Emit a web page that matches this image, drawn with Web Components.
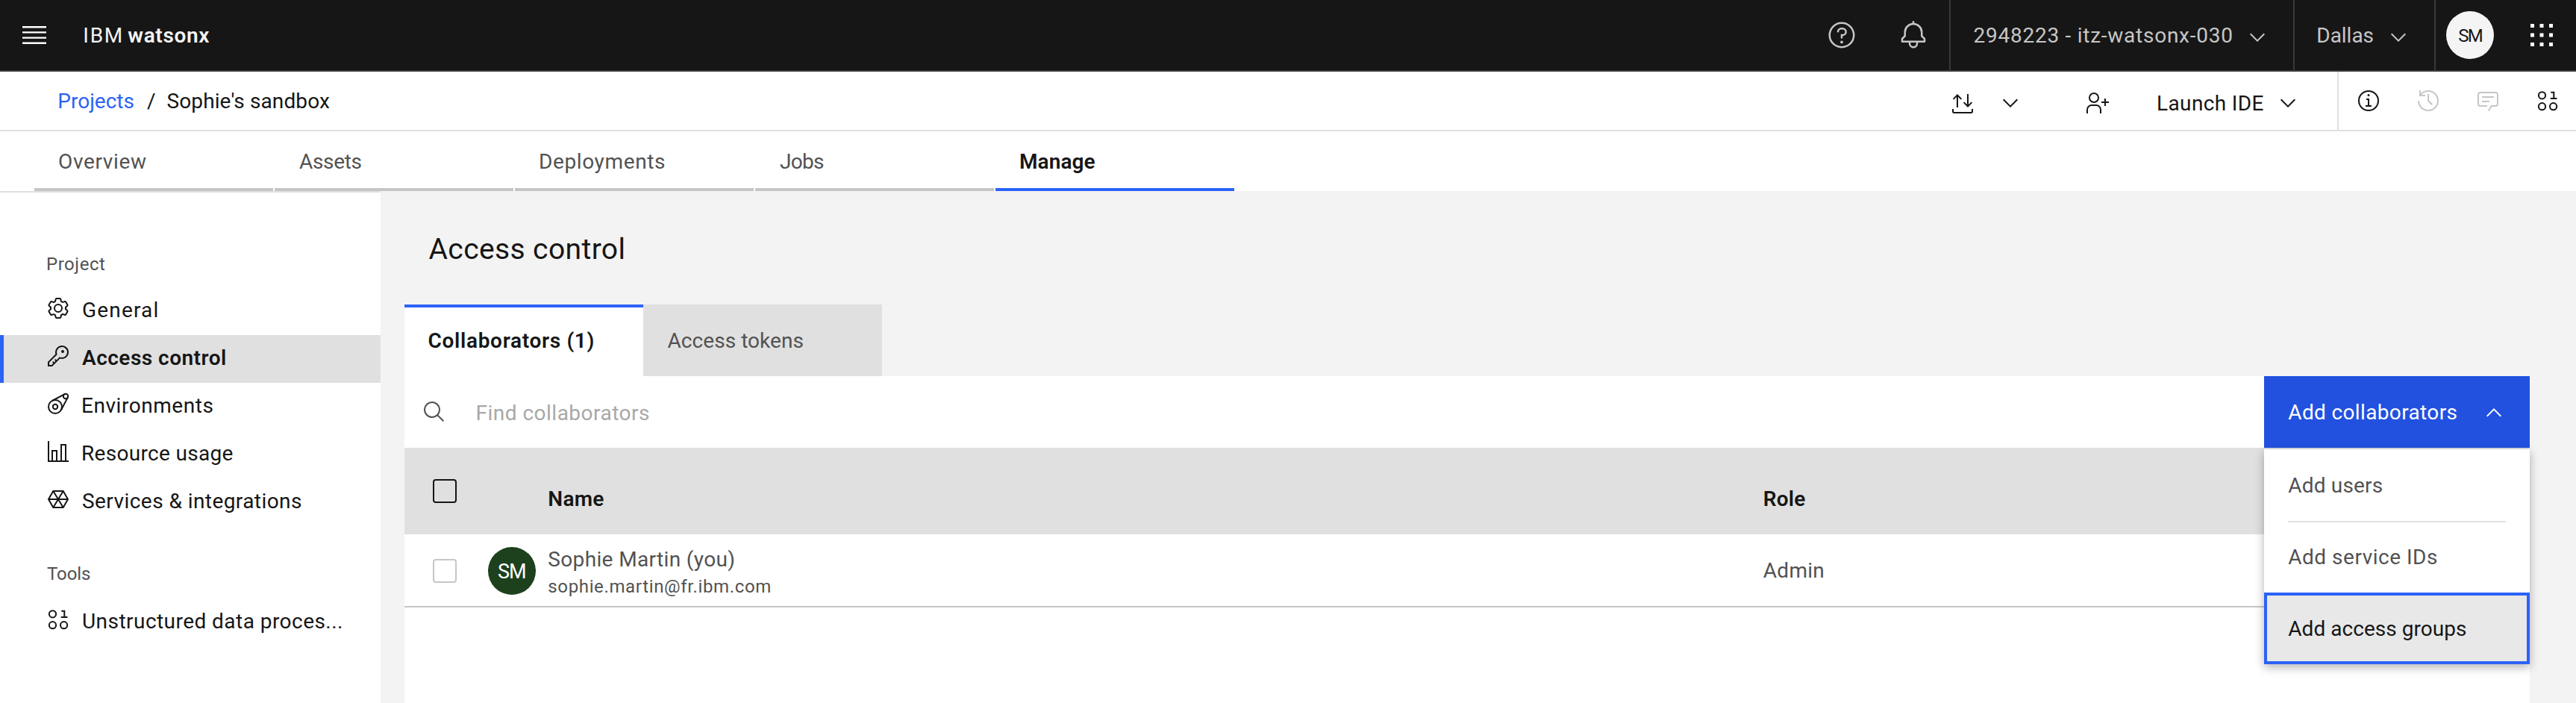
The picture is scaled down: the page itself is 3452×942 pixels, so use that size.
<!DOCTYPE html>
<html lang="en">
<head>
<meta charset="utf-8">
<title>IBM watsonx</title>
<style>
html,body{margin:0;height:100%;overflow:hidden;background:#f3f3f3}
body{font-family:Roboto,"Open Sans",sans-serif;color:#161616}
</style>
</head>
<body>
<wx-app></wx-app>
<script>
const define = (name, html, ready) => {
  const t = document.createElement('template');
  t.innerHTML = html;
  customElements.define(name, class extends HTMLElement {
    constructor() {
      super();
      this.attachShadow({mode: 'open'}).append(t.content.cloneNode(true));
    }
    connectedCallback() { if (ready) ready(this, this.shadowRoot); }
  });
};

// Text label: tracks its letters so that the word fills the width given in `w`.
const ctx = document.createElement('canvas').getContext('2d');
define('wx-label', `<style>
  :host{display:block;flex:none;white-space:pre;line-height:36px;padding-top:2px}
</style><slot></slot>`, el => {
  const size = +(el.getAttribute('size') || 28), weight = el.getAttribute('weight') || 400;
  const text = el.textContent, w = +el.getAttribute('w');
  ctx.font = `${weight} ${size}px Roboto, "Open Sans", sans-serif`;
  const m = ctx.measureText(text);
  const ink = m.actualBoundingBoxLeft + m.actualBoundingBoxRight;
  el.style.fontSize = size + 'px';
  el.style.fontWeight = weight;
  el.style.width = w + 'px';
  el.style.textIndent = m.actualBoundingBoxLeft + 'px';
  if (text.length > 1) el.style.letterSpacing = ((w - ink) / (text.length - 1)).toFixed(3) + 'px';
});

const icons = {
  menu: '<path d="M3.2 6.4h25.6v1.92H3.2zM3.2 12.16h25.6v1.92H3.2zM3.2 17.92h25.6v1.92H3.2zM3.2 23.68h25.6v1.92H3.2z"/>',
  help: '<circle cx="16" cy="16" r="13" class="s"/><path d="M17 8h-1.5A4.5 4.5 0 0 0 11 12.5V13h2v-.5a2.5 2.5 0 0 1 2.5-2.5H17a2.5 2.5 0 0 1 0 5h-2v4.5h2V17a4.5 4.5 0 0 0 0-9z"/><circle cx="16" cy="23.5" r="1.5"/>',
  bell: '<path d="M28.707 19.293 26 16.586V13a10.014 10.014 0 0 0-9-9.949V1h-2v2.051A10.014 10.014 0 0 0 6 13v3.586l-2.707 2.707A1 1 0 0 0 3 20v3a1 1 0 0 0 1 1h7v.777a5.152 5.152 0 0 0 4.5 5.199A5.006 5.006 0 0 0 21 25v-1h7a1 1 0 0 0 1-1v-3a1 1 0 0 0-.293-.707zM19 25a3 3 0 0 1-6 0v-1h6zm8-3H5v-1.586l2.707-2.707A1 1 0 0 0 8 17v-4a8 8 0 0 1 16 0v4a1 1 0 0 0 .293.707L27 20.414z"/>',
  down: '<path d="M16 22 6 12l1.4-1.4 8.6 8.6 8.6-8.6L26 12z"/>',
  up: '<path d="M16 10l10 10-1.4 1.4-8.6-8.6-8.6 8.6L6 20z"/>',
  apps: '<path d="M4 4h4v4H4zM14 4h4v4h-4zM24 4h4v4h-4zM4 14h4v4H4zM14 14h4v4h-4zM24 14h4v4h-4zM4 24h4v4H4zM14 24h4v4h-4zM24 24h4v4h-4z"/>',
  transfer: '<path class="s" d="M9 3.5V20M3.6 8.9 9 3.500l5.400 5.400M23 2v17M17.600 13.100l5.400 5.400 5.400-5.400M3 22v3.300Q3 27 4.700 27h22.600q1.700 0 1.700-1.700V22"/>',
  adduser: '<path class="s" d="M3 30v-5a6 6 0 0 1 6-6h6a6 6 0 0 1 6 6v5M27 10v10M22 15h10"/><circle class="s" cx="12" cy="9" r="6"/>',
  info: '<path d="M17 22v-9h-4v2h2v7h-3v2h8v-2zM16 7a1.500 1.500 0 1 0 0 3 1.500 1.500 0 0 0 0-3z"/><circle class="s" cx="16" cy="16" r="13"/>',
  history: '<path d="M20.590 22 15 16.410V7h2v8.580l5 5.010zM16 2A13.940 13.940 0 0 0 6 6.230V2H4v8h8V8H7.080A12 12 0 1 1 4 16H2A14 14 0 1 0 16 2z"/>',
  chat: '<path d="M17.740 30 16 29l4-7h6a2 2 0 0 0 2-2V8a2 2 0 0 0-2-2H6a2 2 0 0 0-2 2v12a2 2 0 0 0 2 2h9v2H6a4 4 0 0 1-4-4V8a4 4 0 0 1 4-4h20a4 4 0 0 1 4 4v12a4 4 0 0 1-4 4h-4.840zM8 10h16v2H8zM8 16h10v2H8z"/>',
  binary: '<circle class="s" cx="8.500" cy="8.800" r="4.600"/><circle class="s" cx="8.500" cy="23.700" r="4.600"/><circle class="s" cx="23.600" cy="23.700" r="4.600"/><path class="s" d="M20.300 4.800h4V13M19.700 13.100h8.800"/>',
  gear: '<path d="M27 16.760c0-.25 0-.5 0-.76s0-.51 0-.77l1.920-1.680A2 2 0 0 0 29.300 11L26.940 7a2 2 0 0 0-1.730-1 2 2 0 0 0-.64.100l-2.430.820a11.350 11.350 0 0 0-1.310-.75l-.51-2.520a2 2 0 0 0-2-1.610H13.640a2 2 0 0 0-2 1.610l-.51 2.520a11.480 11.480 0 0 0-1.320.750L7.430 6.060A2 2 0 0 0 6.790 6 2 2 0 0 0 5.060 7L2.700 11a2 2 0 0 0 .41 2.510L5 15.240c0 .25 0 .5 0 .76s0 .51 0 .77L3.110 18.450A2 2 0 0 0 2.700 21L5.060 25a2 2 0 0 0 1.730 1 2 2 0 0 0 .64-.1l2.430-.82a11.350 11.350 0 0 0 1.310.75l.51 2.520a2 2 0 0 0 2 1.610h4.720a2 2 0 0 0 2-1.610l.51-2.520a11.480 11.480 0 0 0 1.320-.75l2.420.82a2 2 0 0 0 .64.100 2 2 0 0 0 1.730-1L29.300 21a2 2 0 0 0-.41-2.510zM25.210 24l-3.430-1.160a8.860 8.860 0 0 1-2.710 1.570L18.360 28H13.640l-.71-3.550a9.360 9.360 0 0 1-2.700-1.570L6.790 24 4.430 20l2.720-2.400a8.900 8.900 0 0 1 0-3.130L4.430 12 6.790 8l3.430 1.160a8.860 8.860 0 0 1 2.710-1.570L13.640 4h4.720l.71 3.550a9.360 9.360 0 0 1 2.700 1.570L25.210 8 27.570 12l-2.720 2.400a8.900 8.900 0 0 1 0 3.130L27.570 20z"/><circle class="s" cx="16" cy="16" r="5"/>',
  key: '<path d="M21 2a9 9 0 0 0-8.612 11.612L2 24v6h6l10.388-10.388A9 9 0 1 0 21 2zm0 16a7.013 7.013 0 0 1-2.032-.302l-1.147-.348-.847.847-3.181 3.181L12.414 20 11 21.414l1.379 1.379-1.586 1.586L9.414 23 8 24.414l1.379 1.379L7.172 28H4v-3.172l9.802-9.802.847-.847-.347-1.147A7 7 0 1 1 21 18z"/><circle cx="22" cy="10" r="2"/>',
  env: '<circle class="s" cx="12" cy="20" r="9"/><circle class="s" cx="12" cy="20" r="3.200"/><circle class="s" cx="26" cy="6" r="3.200"/><path class="s" d="M8 12 24.600 3.100M20 24.200 28.900 7.400"/>',
  chart: '<path class="s" d="M3 2v27h27M8 29V15h6v14M20 29V7h6v22"/>',
  hex: '<path class="s" d="M3 16 9.300 5h13.400L29 16l-6.300 11H9.300zM3 16h26M9.300 5l13.400 22M22.700 5 9.300 27"/>',
  search: '<path d="M29 27.586l-7.552-7.552a11.018 11.018 0 1 0-1.414 1.414L27.586 29zM4 13a9 9 0 1 1 9 9 9.010 9.010 0 0 1-9-9z"/>'
};
define('wx-icon', `<style>
  :host{display:block;flex:none}
  svg{display:block;width:100%;height:100%;overflow:visible;fill:currentColor}
  .s{fill:none;stroke:currentColor;stroke-width:2}
</style><svg viewBox="0 0 32 32" aria-hidden="true"></svg>`, (el, root) => {
  const s = (el.getAttribute('size') || 32) + 'px';
  el.style.width = el.style.height = s;
  root.querySelector('svg').innerHTML = icons[el.getAttribute('name')];
});

define('wx-avatar', `<style>
  :host{display:flex;flex:none;width:64px;height:64px;border-radius:50%;align-items:center;justify-content:center;background:var(--avatar-bg,#f4f4f4)}
</style><slot></slot>`);

define('wx-checkbox', `<style>
  :host{display:block;flex:none;box-sizing:border-box;width:32px;height:32px;border:2px solid currentColor;border-radius:4px}
</style>`);

define('wx-header', `<style>
  :host{display:flex;box-sizing:border-box;height:96px;border-bottom:2px solid #393939;background:#161616;color:#c6c6c6;align-items:center}
  .brand{display:flex;gap:8.500px;margin-left:47.300px;color:#f4f4f4;flex:1}
  .cell{display:flex;flex:none;align-items:center;height:94px;box-sizing:border-box;border-left:2px solid #393939}
  .menu{color:#fff;margin-left:26px}
</style>
<wx-icon class="menu" name="menu" size="40"></wx-icon>
<div class="brand"><wx-label w="49.500">IBM</wx-label><wx-label w="109" weight="600">watsonx</wx-label></div>
<wx-icon name="help" size="40" style="margin-right:56px"></wx-icon>
<wx-icon name="bell" size="40" style="margin-right:28px"></wx-icon>
<div class="cell" style="width:461px;padding-left:31.500px"><wx-label w="345.700">2948223 - itz-watsonx-030</wx-label><wx-icon name="down" style="margin:6px 0 0 17.800px"></wx-icon></div>
<div class="cell" style="width:189px;padding-left:31.300px"><wx-label w="74.300">Dallas</wx-label><wx-icon name="down" style="margin:6px 0 0 17.400px"></wx-icon></div>
<div class="cell" style="width:190px;padding-left:14px"><wx-avatar><wx-label size="24" w="31.500" style="color:#161616">SM</wx-label></wx-avatar><wx-icon name="apps" size="40" style="color:#fff;margin-left:44px"></wx-icon></div>`);

define('wx-toolbar', `<style>
  :host{display:flex;box-sizing:border-box;height:80px;border-bottom:2px solid #e0e0e0;background:#fff;align-items:center}
  nav{display:flex;flex:1;margin-left:79.300px}
  .panel{display:flex;flex:none;align-items:center;gap:48px;height:78px;box-sizing:border-box;width:320px;border-left:2px solid #e0e0e0;padding:0 0 0 24px}
  .off{color:#c6c6c6}
</style>
<nav><wx-label w="100.200" style="color:#2c62f6">Projects</wx-label><wx-label w="9" style="margin:0 18.500px 0 17.500px">/</wx-label><wx-label w="217.500">Sophie's sandbox</wx-label></nav>
<wx-icon name="transfer" style="margin:10px 32px 0 0"></wx-icon>
<wx-icon name="down" style="margin:6px 84px 0 0"></wx-icon>
<wx-icon name="adduser" style="margin:6px 66px 0 0"></wx-icon>
<wx-label w="140.600" style="margin-top:5px">Launch IDE</wx-label>
<wx-icon name="down" style="margin:6px 50px 0 17.400px"></wx-icon>
<div class="panel"><wx-icon name="info"></wx-icon><wx-icon name="history" class="off"></wx-icon><wx-icon name="chat" class="off"></wx-icon><wx-icon name="binary"></wx-icon></div>`);

define('wx-nav-tab', `<style>
  :host{display:flex;align-items:center;box-sizing:border-box;width:320px;height:80px;padding:4px 0 0 33px;border-bottom:4px solid #c6c6c6;color:#525252}
  :host([selected]){border-color:#2c62f6;color:#161616}
</style><slot></slot>`);

define('wx-nav-tabs', `<style>
  :host{display:flex;gap:2px;height:80px;background:#fff;padding-left:46px}
</style>
<wx-nav-tab><wx-label w="117">Overview</wx-label></wx-nav-tab>
<wx-nav-tab><wx-label w="83.500">Assets</wx-label></wx-nav-tab>
<wx-nav-tab><wx-label w="167" style="margin-left:1px">Deployments</wx-label></wx-nav-tab>
<wx-nav-tab><wx-label w="59">Jobs</wx-label></wx-nav-tab>
<wx-nav-tab selected><wx-label w="100.500" weight="600">Manage</wx-label></wx-nav-tab>`);

define('wx-side-item', `<style>
  :host{display:flex;box-sizing:border-box;height:64px;padding:12px 0 0 57px;border-left:5px solid transparent;gap:17px}
  :host([selected]){background:#e0e0e0;border-color:#2c62f6}
  div{margin-top:-1px}
</style><slot name="icon"></slot><div><slot></slot></div>`);

define('wx-sidebar', `<style>
  :host{display:block;box-sizing:border-box;width:510px;border-top:2px solid #e0e0e0;background:#fff;flex:none}
  .group{color:#525252;margin-left:63px}
</style>
<wx-label class="group" size="24" w="78" style="padding:78px 0 13px">Project</wx-label>
<wx-side-item><wx-icon slot="icon" name="gear"></wx-icon><wx-label w="99.500">General</wx-label></wx-side-item>
<wx-side-item selected><wx-icon slot="icon" name="key"></wx-icon><wx-label w="192" weight="600" style="margin-left:-1px">Access control</wx-label></wx-side-item>
<wx-side-item><wx-icon slot="icon" name="env"></wx-icon><wx-label w="174.500">Environments</wx-label></wx-side-item>
<wx-side-item><wx-icon slot="icon" name="chart"></wx-icon><wx-label w="200.500">Resource usage</wx-label></wx-side-item>
<wx-side-item><wx-icon slot="icon" name="hex"></wx-icon><wx-label w="293">Services &amp; integrations</wx-label></wx-side-item>
<wx-label class="group" size="24" w="58" style="padding:46px 0 15px">Tools</wx-label>
<wx-side-item><wx-icon slot="icon" name="binary"></wx-icon><wx-label w="347">Unstructured data proces...</wx-label></wx-side-item>`);

define('wx-content-tabs', `<style>
  :host{display:flex;height:96px}
  div{display:flex;align-items:center;box-sizing:border-box;width:320px;padding-left:32.500px;background:#e0e0e0;color:#525252}
  .on{background:#fff;color:#161616;border-top:4px solid #2c62f6;padding-bottom:4px}
</style>
<div class="on"><wx-label w="221" weight="600">Collaborators (1)</wx-label></div>
<div><wx-label w="182">Access tokens</wx-label></div>`);

define('wx-menu', `<style>
  :host{display:block;width:356px;height:288px;background:#fff;box-shadow:0 4px 12px rgba(0,0,0,.3);color:#525252}
  div{display:flex;align-items:center;box-sizing:border-box;height:96px;padding-left:32.300px}
  hr{height:2px;margin:0 32px -2px;border:0;background:#e0e0e0}
  .on{background:#e8e8e8;border:4px solid #2c62f6;padding-left:28.300px;color:#161616}
</style>
<div><wx-label w="126.400">Add users</wx-label></div>
<hr>
<div><wx-label w="199.700">Add service IDs</wx-label></div>
<div class="on"><wx-label w="238.700">Add access groups</wx-label></div>`);

define('wx-add-button', `<style>
  :host{display:block;position:relative;width:356px;height:96px}
  button{all:unset;display:flex;align-items:center;box-sizing:border-box;width:356px;height:96px;padding-left:32.300px;background:#2251e0;color:#fff}
  wx-menu{position:absolute;top:98px;left:0;z-index:2}
</style>
<button><wx-label w="226.200">Add collaborators</wx-label><wx-icon name="up" style="margin:2px 0 0 33.500px"></wx-icon></button>
<wx-menu></wx-menu>`);

define('wx-collaborators', `<style>
  :host{display:block;background:#fff;flex:1}
  .search{display:flex;align-items:center;height:96px;padding-left:24px}
  .search wx-icon{color:#525252;margin-right:41.500px}
  .search .hint{color:#a8a8a8;flex:1;margin-top:2px}
  .row{display:grid;grid-template-columns:74px 81.300px 1628.500px auto;padding-left:38px;box-sizing:border-box;align-items:center}
  .head{height:116px;background:#e0e0e0}
  .head wx-label{margin-top:20px}
  .body{height:98px;border-bottom:2px solid #c6c6c6;color:#525252}
  .body wx-checkbox{color:#c6c6c6;margin-top:2px}
  .who{padding-top:5px}
  wx-avatar{--avatar-bg:#1d401d;color:#fff;margin-top:2px}
</style>
<div class="search"><wx-icon name="search"></wx-icon><div class="hint"><wx-label w="230.500">Find collaborators</wx-label></div><wx-add-button></wx-add-button></div>
<div class="row head"><wx-checkbox></wx-checkbox><span></span><wx-label w="74" weight="600">Name</wx-label><wx-label w="55.500" weight="600">Role</wx-label></div>
<div class="row body"><wx-checkbox></wx-checkbox><wx-avatar><wx-label size="27" w="36">SM</wx-label></wx-avatar><div class="who"><wx-label w="248">Sophie Martin (you)</wx-label><wx-label size="24" w="297" style="margin-top:-2px">sophie.martin@fr.ibm.com</wx-label></div><wx-label w="80.500" style="margin-left:-1px">Admin</wx-label></div>`);

define('wx-main', `<style>
  :host{display:flex;flex-direction:column;flex:1;padding:0 62px 0 32px;background:#f3f3f3}
  h1{margin:0;height:152px;display:flex;align-items:center;box-sizing:border-box;padding:2px 0 0 32.500px;font-weight:400}
</style>
<h1><wx-label size="39" w="261">Access control</wx-label></h1>
<wx-content-tabs></wx-content-tabs>
<wx-collaborators></wx-collaborators>`);

define('wx-app', `<style>
  :host{display:flex;flex-direction:column;width:3452px;height:942px;overflow:hidden}
  .page{display:flex;flex:1}
</style>
<wx-header></wx-header><wx-toolbar></wx-toolbar><wx-nav-tabs></wx-nav-tabs>
<div class="page"><wx-sidebar></wx-sidebar><wx-main></wx-main></div>`);
</script>
</body>
</html>
